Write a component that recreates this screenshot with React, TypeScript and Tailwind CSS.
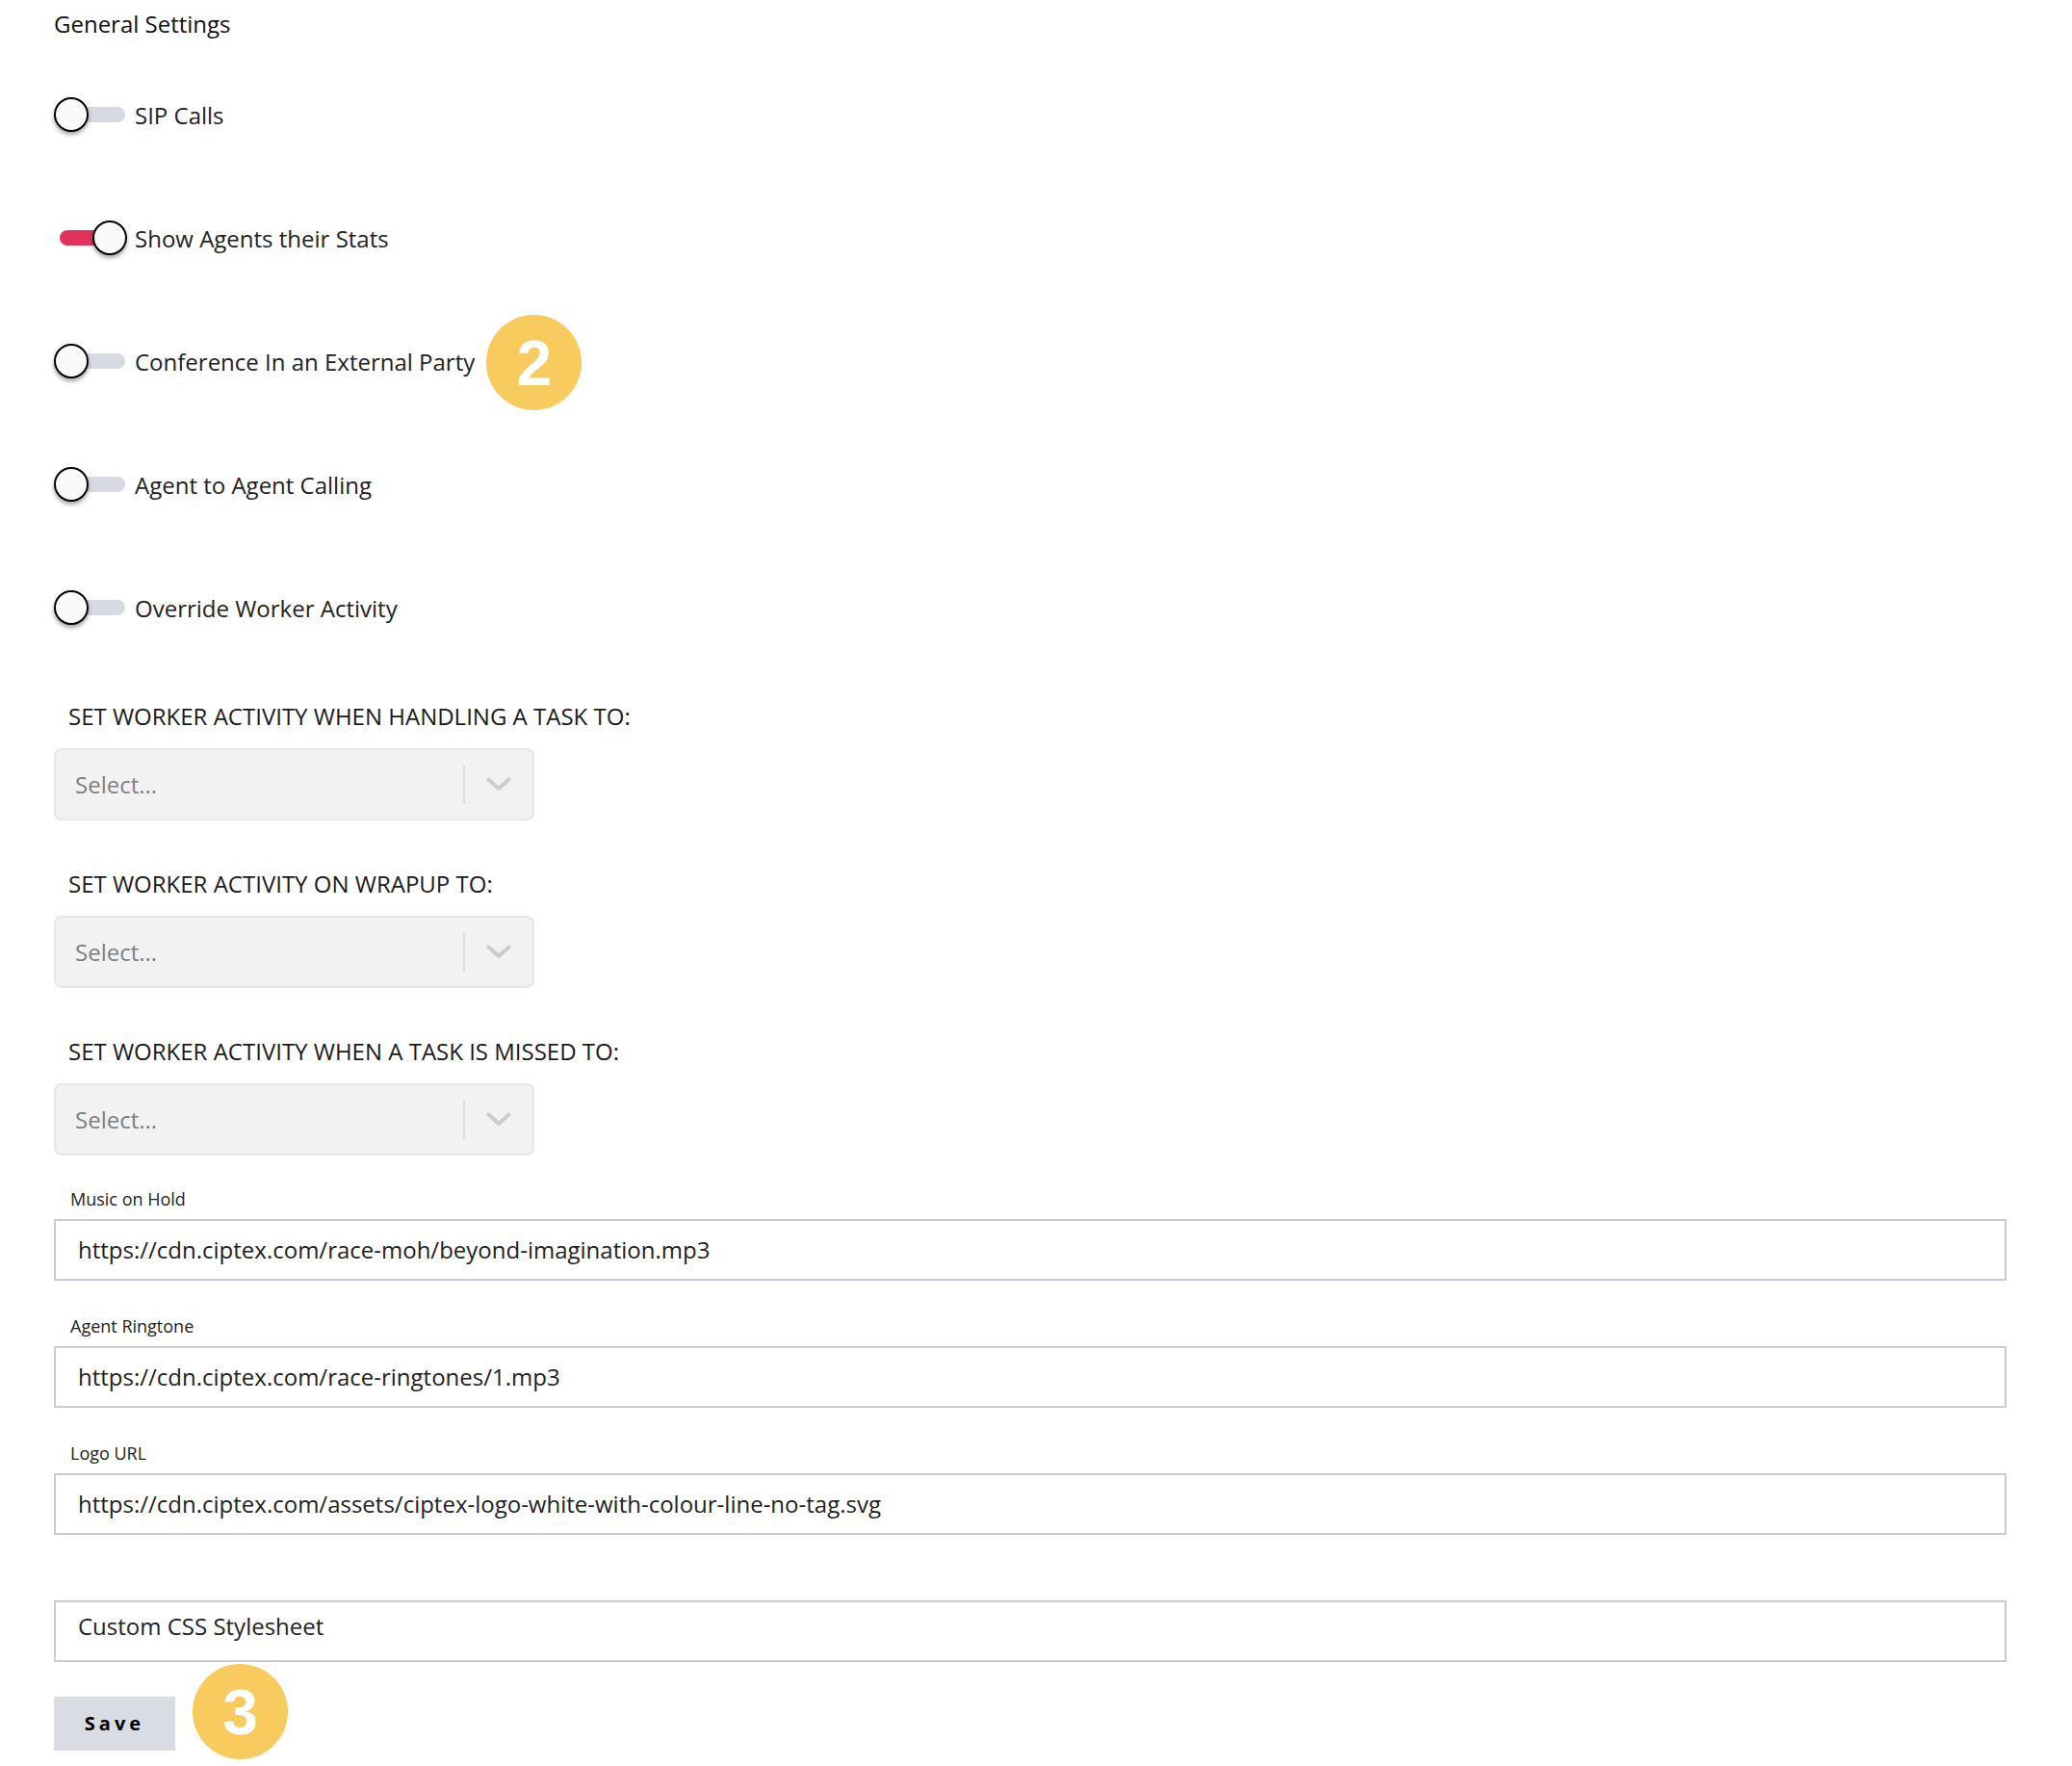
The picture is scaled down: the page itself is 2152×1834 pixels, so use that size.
import React from "react";

const Toggle = ({ on }: { on: boolean }) => (
  <div className="relative w-[74px] h-[36px] shrink-0">
    <div
      className={
        on
          ? "absolute left-[6px] top-[10px] w-[68px] h-[16px] rounded-full bg-[#e0325a]"
          : "absolute left-[6px] top-[10px] w-[68px] h-[16px] rounded-full bg-[#d8dae3]"
      }
    />
    <div
      className={
        on
          ? "absolute top-0 left-[40px] w-[36px] h-[36px] rounded-full bg-[#fafafa] border-2 border-black shadow-[0_3px_4px_rgba(0,0,0,0.35)]"
          : "absolute top-0 left-0 w-[36px] h-[36px] rounded-full bg-[#fafafa] border-2 border-black shadow-[0_3px_4px_rgba(0,0,0,0.35)]"
      }
    />
  </div>
);

const Badge = ({ n }: { n: string }) => (
  <div className="w-[99px] h-[99px] rounded-full bg-[#f7cb5e] flex items-center justify-center shrink-0">
    <span className="text-white font-bold text-[66px] leading-none font-['Liberation_Sans',Arial,sans-serif]">
      {n}
    </span>
  </div>
);

const ToggleRow = ({
  on,
  label,
  badge,
}: {
  on: boolean;
  label: string;
  badge?: string;
}) => (
  <div className="h-[128px] flex items-center">
    <Toggle on={on} />
    <span className="ml-[10px] text-[24px] leading-[33px] text-[#222]">{label}</span>
    {badge ? (
      <div className="ml-[12px] mt-[3px]">
        <Badge n={badge} />
      </div>
    ) : null}
  </div>
);

const Select = () => (
  <div className="w-[499px] h-[75px] bg-[#f2f2f2] border-2 border-[#e6e6e6] rounded-[8px] flex items-center">
    <div className="flex-1 pl-[20px] text-[24px] text-[#808080]">Select...</div>
    <div className="w-[2px] h-[40px] bg-[#dcdcdc]" />
    <div className="w-[70px] flex items-center justify-center">
      <svg width="26" height="15" viewBox="0 0 26 15">
        <path d="M2.5 2.5 L13 12 L23.5 2.5" stroke="#cccccc" strokeWidth="4" fill="none" strokeLinecap="round" strokeLinejoin="round" />
      </svg>
    </div>
  </div>
);

const SelectBlock = ({ label, first }: { label: string; first?: boolean }) => (
  <div className={first ? "flex flex-col" : "flex flex-col mt-[49px]"}>
    <div className="h-[33px] leading-[33px] pl-[15px] text-[24px] text-[#1a1a1a]">{label}</div>
    <div className="mt-[17px]">
      <Select />
    </div>
  </div>
);

const Field = ({ label, value, area }: { label: string; value: string; area?: boolean }) => (
  <div className="flex flex-col">
    <div className="h-[25px] leading-[25px] text-[18px] pl-[17px] text-[#222]">{label}</div>
    <div
      className={
        area
          ? "mt-[8px] h-[64px] border-2 border-[#c9cbd7] bg-white flex items-start pt-[8px] px-[23px] text-[24px] leading-[33px] text-[#222]"
          : "mt-[8px] h-[64px] border-2 border-[#c9cbd7] bg-white flex items-center px-[23px] text-[24px] text-[#222]"
      }
    >
      {value}
    </div>
  </div>
);

export default function App() {
  return (
    <div className="w-full min-h-[1834px] bg-white font-['Open_Sans',sans-serif] pl-[56px] pr-[68px] pb-[7px]">
      <div className="pt-[8px] leading-[34px] text-[24px] text-[#111]">General Settings</div>

      <div className="mt-[13px] flex flex-col">
        <ToggleRow on={false} label="SIP Calls" />
        <ToggleRow on={true} label="Show Agents their Stats" />
        <ToggleRow on={false} label="Conference In an External Party" badge="2" />
        <ToggleRow on={false} label="Agent to Agent Calling" />
        <ToggleRow on={false} label="Override Worker Activity" />
      </div>

      <div className="mt-[32px] flex flex-col">
        <SelectBlock first label="SET WORKER ACTIVITY WHEN HANDLING A TASK TO:" />
        <SelectBlock label="SET WORKER ACTIVITY ON WRAPUP TO:" />
        <SelectBlock label="SET WORKER ACTIVITY WHEN A TASK IS MISSED TO:" />
      </div>

      <div className="mt-[33px] flex flex-col gap-[35px]">
        <Field label="Music on Hold" value="https://cdn.ciptex.com/race-moh/beyond-imagination.mp3" />
        <Field label="Agent Ringtone" value="https://cdn.ciptex.com/race-ringtones/1.mp3" />
        <Field label="Logo URL" value="https://cdn.ciptex.com/assets/ciptex-logo-white-with-colour-line-no-tag.svg" />
        <Field label="" value="Custom CSS Stylesheet" area />
      </div>

      <div className="flex items-start">
        <button className="mt-[36px] w-[126px] h-[56px] bg-[#d9dce3] flex items-center justify-center text-[20px] font-bold tracking-[4px] text-black">
          Save
        </button>
        <div className="ml-[18px] mt-[2px]">
          <Badge n="3" />
        </div>
      </div>
    </div>
  );
}
